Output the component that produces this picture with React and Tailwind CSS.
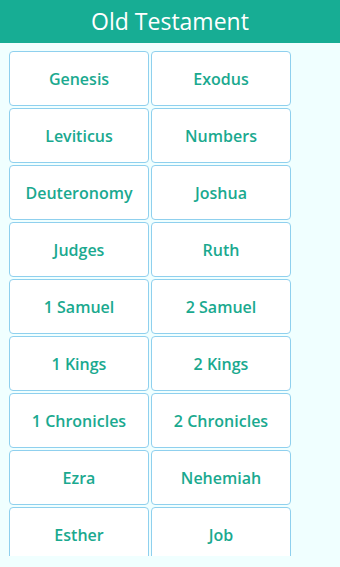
import React from "react";

const books = [
  "Genesis",
  "Exodus",
  "Leviticus",
  "Numbers",
  "Deuteronomy",
  "Joshua",
  "Judges",
  "Ruth",
  "1 Samuel",
  "2 Samuel",
  "1 Kings",
  "2 Kings",
  "1 Chronicles",
  "2 Chronicles",
  "Ezra",
  "Nehemiah",
  "Esther",
  "Job",
];

const App = () => {
  return (
    <div
      className="w-[340px] h-[567px] bg-[#f0ffff] overflow-hidden"
      style={{ fontFamily: '"Open Sans", "Noto Sans", sans-serif' }}
    >
      <header className="h-[43px] bg-[#17ad94] flex items-center justify-center">
        <h1 className="text-white text-[23px] leading-none">Old Testament</h1>
      </header>

      {/* book list, clipped like a scroll view */}
      <div className="h-[513px] overflow-hidden pt-2 pl-[9px]">
        <div className="grid grid-cols-[140px_140px] gap-[2px]">
          {books.map((name) => (
            <button
              key={name}
              className="h-[55px] bg-white border border-[#8fd0ee] rounded-[4px] text-[#1aa98f] font-semibold text-[16px]"
            >
              {name}
            </button>
          ))}
        </div>
      </div>
    </div>
  );
};

export default App;
